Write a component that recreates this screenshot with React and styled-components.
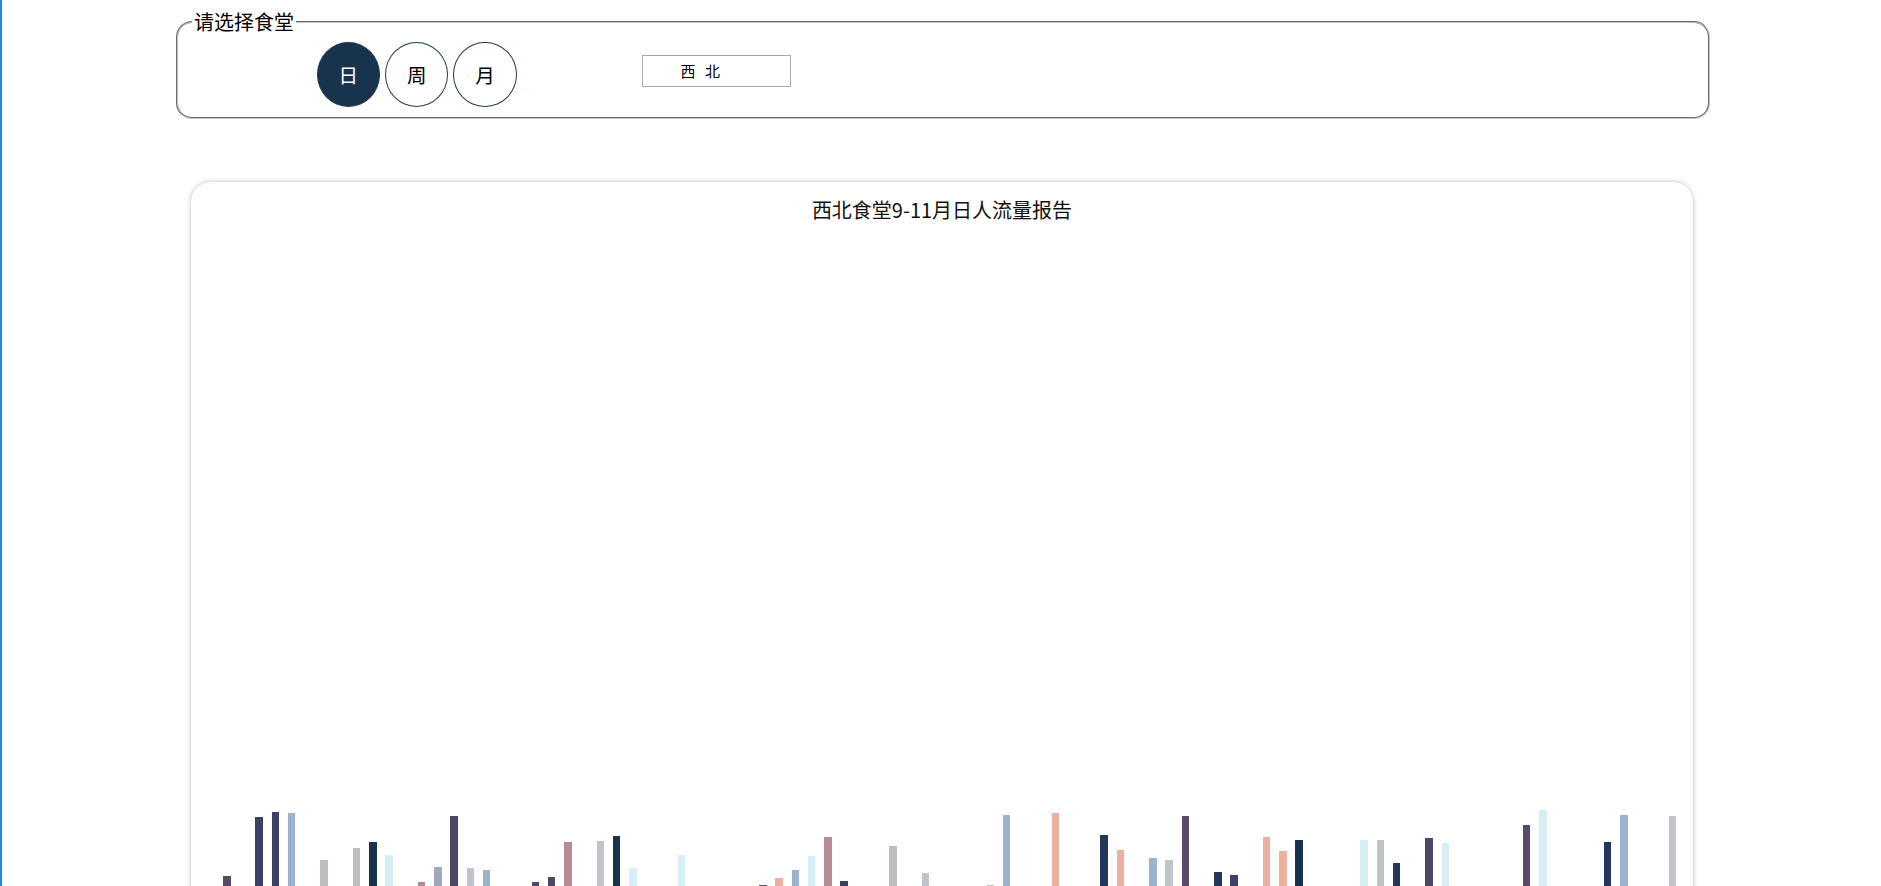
import React, { useState } from "react";
import styled, { createGlobalStyle } from "styled-components";

const GlobalStyle = createGlobalStyle`
  html, body {
    margin: 0;
    padding: 0;
    background: #fff;
  }
  body {
    font-family: "Noto Sans CJK SC", "Noto Sans", sans-serif;
    color: #000;
  }
`;

const Page = styled.div`
  box-sizing: border-box;
  min-height: 100vh;
  border-left: 2px solid #1e88e5;
  padding: 9px 0 40px 174px;
  overflow: hidden;
`;

const Picker = styled.fieldset`
  box-sizing: border-box;
  width: 1534px;
  margin: 0;
  padding: 6.6px 14px 10.4px;
  border: 2px groove rgb(192, 192, 192);
  border-radius: 16px;
`;

const PickerLegend = styled.legend`
  padding: 0 2px;
  font-size: 20px;
  line-height: 26px;
`;

const PickerRow = styled.div`
  display: flex;
  align-items: flex-start;
  margin-left: 124.7px;
`;

const PeriodGroup = styled.div`
  display: flex;
  gap: 5px;
`;

const PeriodButton = styled.button`
  box-sizing: border-box;
  width: 63.3px;
  height: 65px;
  padding: 0;
  border-radius: 50%;
  border: 1px solid #1f3a55;
  background: ${(p) => (p.$active ? "#18334d" : "#fff")};
  color: ${(p) => (p.$active ? "#fff" : "#000")};
  font-family: inherit;
  font-size: 19.5px;
  cursor: pointer;
`;

const CanteenBox = styled.div`
  box-sizing: border-box;
  width: 149px;
  height: 32px;
  margin: 13.3px 0 0 125px;
  padding-left: 38px;
  border: 1px solid #a9a9a9;
  font-size: 15px;
  line-height: 30px;
  word-spacing: 6px;
  color: #000;
`;

const ChartCard = styled.section`
  box-sizing: border-box;
  width: 1502px;
  margin: 63px 0 0 15px;
  border-radius: 20px;
  background: #fff;
  box-shadow: 0 0 5px rgba(0, 0, 0, 0.28);
`;

const ChartTitle = styled.h2`
  margin: 0;
  height: 55px;
  line-height: 55px;
  text-align: center;
  font-size: 20px;
  font-weight: normal;
  color: #111;
`;

const ChartSvg = styled.svg`
  display: block;
`;

// [day index, top of bar in page px, colour]
const bars = [
  [0, 876, "#5a4a68"],
  [2, 817, "#3a4066"],
  [3, 812, "#3a4066"],
  [4, 813, "#9ab4cf"],
  [6, 860, "#c0bac3"],
  [8, 848, "#c0bac3"],
  [9, 842, "#17334d"],
  [10, 855, "#d6eef5"],
  [12, 882, "#b48c93"],
  [13, 867, "#a0a8bd"],
  [14, 816, "#4e4868"],
  [15, 868, "#bfc3cb"],
  [16, 870, "#9ab4cf"],
  [19, 882, "#4e4868"],
  [20, 877, "#4e4868"],
  [21, 842, "#b48c93"],
  [23, 841, "#bfc3cb"],
  [24, 836, "#17334d"],
  [25, 868, "#d6eef5"],
  [28, 855, "#d6eef5"],
  [33, 885, "#4e4868"],
  [34, 878, "#eeaf9e"],
  [35, 870, "#9ab4cf"],
  [36, 856, "#d6eef5"],
  [37, 837, "#b48c93"],
  [38, 881, "#3a4066"],
  [41, 846, "#c0bac3"],
  [43, 873, "#bfc3cb"],
  [47, 885, "#bfc3cb"],
  [48, 815, "#9ab4cf"],
  [51, 813, "#eeaf9e"],
  [54, 835, "#23375c"],
  [55, 850, "#eeaf9e"],
  [57, 858, "#9ab4cf"],
  [58, 860, "#bfc3cb"],
  [59, 816, "#5a4a68"],
  [61, 872, "#23375c"],
  [62, 875, "#3a4066"],
  [64, 837, "#eeaf9e"],
  [65, 851, "#eeaf9e"],
  [66, 840, "#17334d"],
  [70, 840, "#d6eef5"],
  [71, 840, "#bfc3cb"],
  [72, 863, "#23375c"],
  [74, 838, "#4e4868"],
  [75, 843, "#d6eef5"],
  [80, 825, "#5a4a68"],
  [81, 810, "#d6eef5"],
  [85, 842, "#23375c"],
  [86, 815, "#9ab4cf"],
  [89, 816, "#bfc3cb"],
];

// chart svg starts 237px down the page, card starts 191px in
const SVG_TOP = 237;
const SVG_LEFT = 191;
const BASELINE = 920;

function BarChart() {
  return (
    <ChartSvg width="1502" height={BASELINE - SVG_TOP + 20}>
      {bars.map(([i, top, color]) => (
        <rect
          key={i}
          x={223 + i * 16.247 - SVG_LEFT}
          y={top - SVG_TOP}
          width="7.5"
          height={BASELINE - top}
          fill={color}
          shapeRendering="crispEdges"
        />
      ))}
    </ChartSvg>
  );
}

export default function App() {
  const [period, setPeriod] = useState("日");

  return (
    <>
      <GlobalStyle />
      <Page>
        <Picker>
          <PickerLegend>请选择食堂</PickerLegend>
          <PickerRow>
            <PeriodGroup>
              {["日", "周", "月"].map((p) => (
                <PeriodButton
                  key={p}
                  $active={p === period}
                  onClick={() => setPeriod(p)}
                >
                  {p}
                </PeriodButton>
              ))}
            </PeriodGroup>
            <CanteenBox>西 北</CanteenBox>
          </PickerRow>
        </Picker>
        <ChartCard>
          <ChartTitle>西北食堂9-11月日人流量报告</ChartTitle>
          <BarChart />
        </ChartCard>
      </Page>
    </>
  );
}
